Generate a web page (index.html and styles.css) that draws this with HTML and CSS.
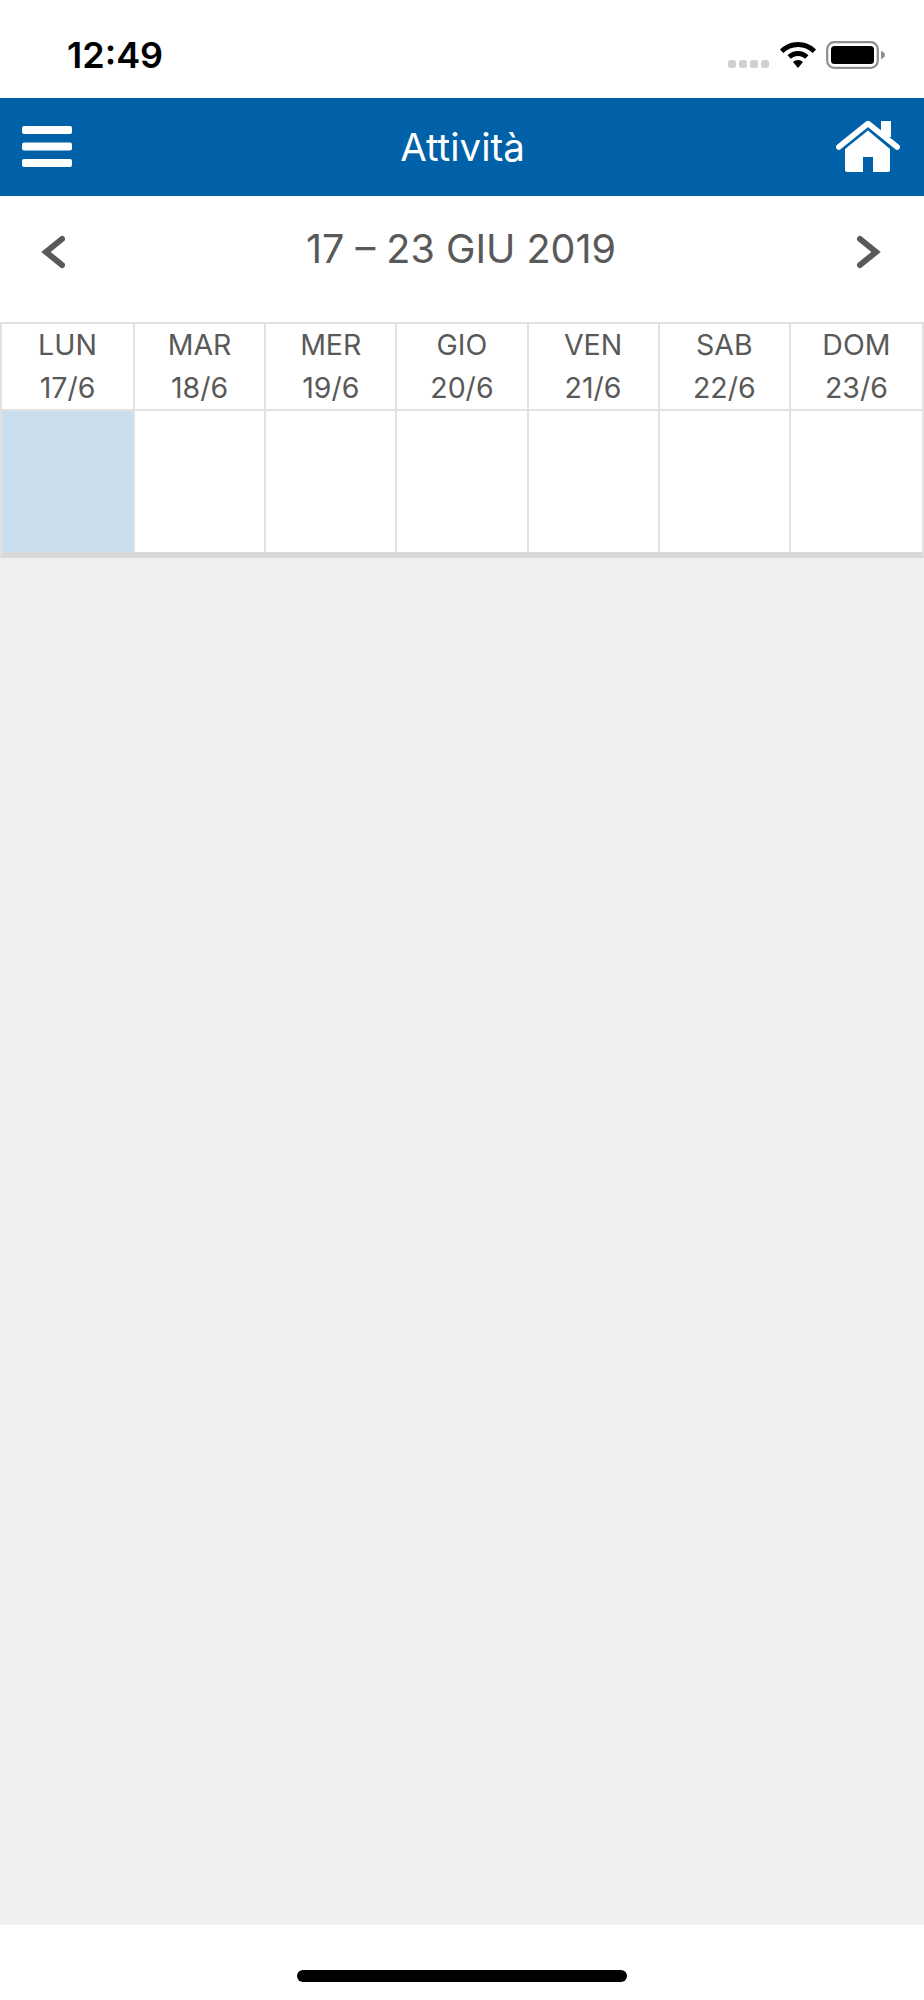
FILE: index.html
```html
<!DOCTYPE html>
<html lang="it">
<head>
<meta charset="utf-8">
<title>Attività</title>
<link rel="stylesheet" href="styles.css">
</head>
<body>
<div class="screen">
  <div class="status">
    <span class="time">12:49</span>
    <div class="status-icons">
      <div class="signal"><i></i><i></i><i></i><i></i></div>
      <svg class="wifi" width="38" height="28" viewBox="0 0 38 28"><path d="M19 1C12 1 6 3.700 1 8.500L4.300 12C8.300 8.200 13.400 6 19 6s10.700 2.200 14.700 6L37 8.500C32 3.700 26 1 19 1z"/><path d="M19 10c-4 0-7.700 1.500-10.500 4.300l3.300 3.500c1.900-1.800 4.400-2.900 7.200-2.900s5.300 1.100 7.200 2.900l3.300-3.500C26.700 11.500 23 10 19 10z"/><path d="M19 19c-2 0-3.700.7-5 2l5 6 5-6c-1.300-1.300-3-2-5-2z"/></svg>
      <svg class="battery" width="60" height="28" viewBox="0 0 60 28"><rect x="1.200" y="1.200" width="50.600" height="25.600" rx="7" fill="none" stroke="#8e8e8e" stroke-width="2.200"/><rect x="5" y="5" width="43" height="18" rx="3.500" fill="#000"/><path d="M55 10c2 .6 4 2 4 4s-2 3.400-4 4z" fill="#8e8e8e"/></svg>
    </div>
  </div>
  <header class="appbar">
    <svg class="menu" width="50" height="41" viewBox="0 0 50 41" fill="#fff"><rect width="50" height="8" y="0" rx="2"/><rect width="50" height="8" y="16.500" rx="2"/><rect width="50" height="8" y="33" rx="2"/></svg>
    <h1 class="title">Attività</h1>
    <svg class="home" width="64" height="52" viewBox="0 0 64 52" fill="#fff"><rect x="45" y="1" width="10" height="16" rx="0.500"/><path d="M32 10.500 9 29V50a2 2 0 0 0 2 2H27V37H37V52H52a2 2 0 0 0 2-2V29z"/><path d="M2.800 27 32 3.500 61.200 27" fill="none" stroke="#fff" stroke-width="5.500" stroke-linecap="round" stroke-linejoin="round"/></svg>
  </header>
  <nav class="week">
    <svg class="chev" width="26" height="34" viewBox="0 0 26 34"><path d="M22 4 6 17 22 30" fill="none" stroke="#595959" stroke-width="6" stroke-linecap="round" stroke-linejoin="miter"/></svg>
    <span class="range">17 – 23 GIU 2019</span>
    <svg class="chev" width="26" height="34" viewBox="0 0 26 34"><path d="M4 4 20 17 4 30" fill="none" stroke="#595959" stroke-width="6" stroke-linecap="round" stroke-linejoin="miter"/></svg>
  </nav>
  <section class="calendar">
    <div class="head"><span>LUN</span><span>17/6</span></div>
    <div class="head"><span>MAR</span><span>18/6</span></div>
    <div class="head"><span>MER</span><span>19/6</span></div>
    <div class="head"><span>GIO</span><span>20/6</span></div>
    <div class="head"><span>VEN</span><span>21/6</span></div>
    <div class="head"><span>SAB</span><span>22/6</span></div>
    <div class="head"><span>DOM</span><span>23/6</span></div>
    <div class="cell today"></div>
    <div class="cell"></div>
    <div class="cell"></div>
    <div class="cell"></div>
    <div class="cell"></div>
    <div class="cell"></div>
    <div class="cell"></div>
  </section>
  <main class="content"></main>
  <footer class="home-area"><div class="home-bar"></div></footer>
</div>
</body>
</html>
```

FILE: styles.css
```css
* { box-sizing: border-box; }
html, body { margin: 0; padding: 0; background: #fff; }
body { font-family: Inter, "Liberation Sans", sans-serif; }
.screen { width: 924px; height: 2000px; display: flex; flex-direction: column; }

.status { height: 98px; flex: none; display: flex; justify-content: space-between; align-items: flex-start; padding: 34px 38px 0 67px; }
.time { font-size: 36px; font-weight: 600; line-height: 42px; color: #000; }
.status-icons { display: flex; align-items: flex-start; padding-top: 7px; }
.signal { display: flex; gap: 3px; margin: 19px 10px 0 0; }
.signal i { width: 8px; height: 8px; border-radius: 2.500px; background: #d0d0d0; display: block; }
.wifi { margin-right: 9px; }
.battery { display: block; }

.appbar { height: 98px; flex: none; background: #0061a8; display: flex; align-items: center; justify-content: space-between; padding: 0 24px 0 22px; }
.menu { display: block; margin-top: -1px; }
.home { display: block; margin-top: -2px; }
.title { margin: 0 0 0 17px; font-size: 38.500px; font-weight: 400; color: #fff; line-height: 40px; }

.week { height: 126px; flex: none; display: flex; align-items: center; justify-content: space-between; padding: 0 42px 20px 40px; }
.chev { display: block; margin-top: 5px; }
.range { font-size: 39.500px; line-height: 44px; font-weight: 400; color: #595959; }

.calendar { flex: none; height: 236px; display: grid; grid-template-columns: 133px repeat(6, 1fr); grid-template-rows: 87px 141px; background: #fff; border: 2px solid #e2e2e2; border-bottom: 6px solid #d9d9d9; }
.head { display: flex; flex-direction: column; align-items: center; justify-content: center; border-right: 2px solid #e2e2e2; border-bottom: 2px solid #e2e2e2; font-size: 28.500px; line-height: 43px; color: #595959; padding-bottom: 1px; }
.head span { display: block; }
.head:nth-child(7) { border-right: 0; }
.cell { border-right: 2px solid #e2e2e2; }
.cell:last-child { border-right: 0; }
.today { background: #cadeed; }

.content { flex: 1; background: #f0f0f0; }
.home-area { height: 75px; flex: none; background: #fff; display: flex; justify-content: center; padding-top: 45px; }
.home-bar { width: 330px; height: 12px; border-radius: 6px; background: #000; }
```
